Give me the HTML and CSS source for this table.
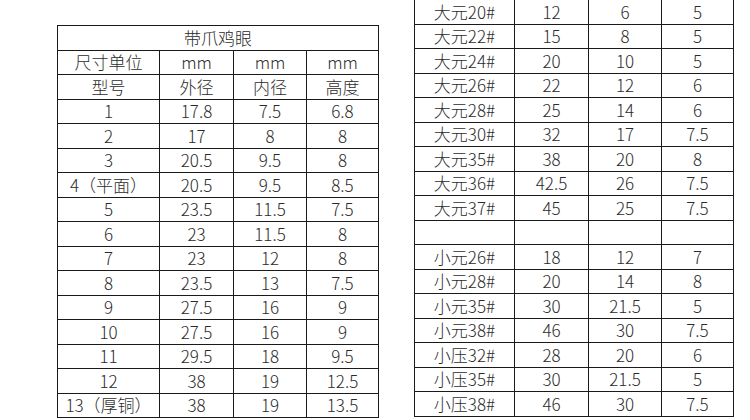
FILE: index.html
```html
<!DOCTYPE html>
<html lang="zh">
<head>
<meta charset="utf-8">
<link rel="stylesheet" href="styles.css">
</head>
<body>
<div class="page">
  <table class="spec spec-left">
    <colgroup><col class="c1"><col class="c2"><col class="c3"><col class="c4"></colgroup>
    <tr><td colspan="4">带爪鸡眼</td></tr>
    <tr><td>尺寸单位</td><td>mm</td><td>mm</td><td>mm</td></tr>
    <tr><td>型号</td><td>外径</td><td>内径</td><td>高度</td></tr>
    <tr><td>1</td><td>17.8</td><td>7.5</td><td>6.8</td></tr>
    <tr><td>2</td><td>17</td><td>8</td><td>8</td></tr>
    <tr><td>3</td><td>20.5</td><td>9.5</td><td>8</td></tr>
    <tr><td>4（平面）</td><td>20.5</td><td>9.5</td><td>8.5</td></tr>
    <tr><td>5</td><td>23.5</td><td>11.5</td><td>7.5</td></tr>
    <tr><td>6</td><td>23</td><td>11.5</td><td>8</td></tr>
    <tr><td>7</td><td>23</td><td>12</td><td>8</td></tr>
    <tr><td>8</td><td>23.5</td><td>13</td><td>7.5</td></tr>
    <tr><td>9</td><td>27.5</td><td>16</td><td>9</td></tr>
    <tr><td>10</td><td>27.5</td><td>16</td><td>9</td></tr>
    <tr><td>11</td><td>29.5</td><td>18</td><td>9.5</td></tr>
    <tr><td>12</td><td>38</td><td>19</td><td>12.5</td></tr>
    <tr><td>13（厚铜）</td><td>38</td><td>19</td><td>13.5</td></tr>
  </table>
  <table class="spec spec-right">
    <colgroup><col class="c1r"><col class="c2"><col class="c3"><col class="c4"></colgroup>
    <tr><td>大元20#</td><td>12</td><td>6</td><td>5</td></tr>
    <tr><td>大元22#</td><td>15</td><td>8</td><td>5</td></tr>
    <tr><td>大元24#</td><td>20</td><td>10</td><td>5</td></tr>
    <tr><td>大元26#</td><td>22</td><td>12</td><td>6</td></tr>
    <tr><td>大元28#</td><td>25</td><td>14</td><td>6</td></tr>
    <tr><td>大元30#</td><td>32</td><td>17</td><td>7.5</td></tr>
    <tr><td>大元35#</td><td>38</td><td>20</td><td>8</td></tr>
    <tr><td>大元36#</td><td>42.5</td><td>26</td><td>7.5</td></tr>
    <tr><td>大元37#</td><td>45</td><td>25</td><td>7.5</td></tr>
    <tr><td></td><td></td><td></td><td></td></tr>
    <tr><td>小元26#</td><td>18</td><td>12</td><td>7</td></tr>
    <tr><td>小元28#</td><td>20</td><td>14</td><td>8</td></tr>
    <tr><td>小元35#</td><td>30</td><td>21.5</td><td>5</td></tr>
    <tr><td>小元38#</td><td>46</td><td>30</td><td>7.5</td></tr>
    <tr><td>小压32#</td><td>28</td><td>20</td><td>6</td></tr>
    <tr><td>小压35#</td><td>30</td><td>21.5</td><td>5</td></tr>
    <tr><td>小压38#</td><td>46</td><td>30</td><td>7.5</td></tr>
  </table>
</div>
</body>
</html>
```
FILE: styles.css
```css
html, body {
  margin: 0;
  padding: 0;
  background: #ffffff;
}
body {
  width: 750px;
  height: 420px;
  overflow: hidden;
  font-family: "Noto Sans CJK SC", "Noto Sans", sans-serif;
  font-weight: 300;
  color: #2b2b2b;
}
.page {
  display: flex;
  align-items: flex-start;
  gap: 35px;
  padding-left: 57px;
}
.spec {
  border-collapse: collapse;
  table-layout: fixed;
  font-size: 17px;
}
.spec td {
  border: 1px solid #1a1a1a;
  height: 23.5px;
  padding: 0;
  text-align: center;
  line-height: 22px;
  white-space: nowrap;
}
.spec-left {
  margin-top: 25px;
  width: 322px;
}
.spec-right {
  margin-top: -1px;
  width: 320px;
}
.c1 { width: 102px; }
.c1r { width: 100px; }
.c2 { width: 74px; }
.c3 { width: 73px; }
.c4 { width: 72px; }
```
